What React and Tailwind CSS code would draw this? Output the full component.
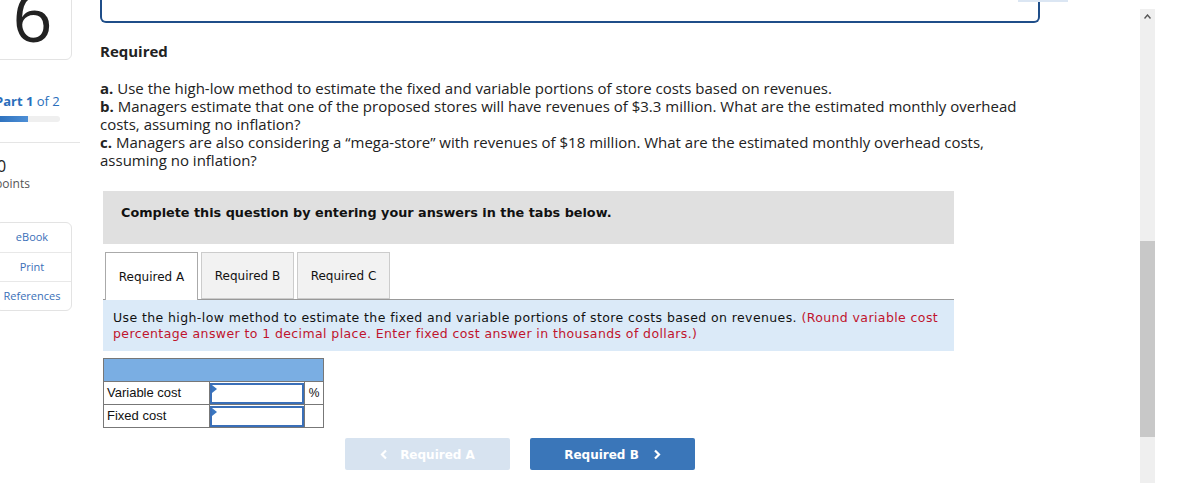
import React from 'react';

const Chevron = ({ dir }) => (
  <svg width="8" height="11" viewBox="0 0 8 11">
    <path
      d={dir === 'left' ? 'M6 1.5 L2 5.5 L6 9.5' : 'M2 1.5 L6 5.5 L2 9.5'}
      fill="none"
      stroke="currentColor"
      strokeWidth="2.2"
    />
  </svg>
);

const SideBar = () => {
  return (
    <div className="w-[77px] -ml-[5px] shrink-0 font-['Open_Sans',sans-serif]">
      <div className="h-[70px] -mt-[10px] border border-[#e3e3e3] rounded-br-[6px] flex justify-center items-start">
        <span className="text-[70px] leading-[64px] text-[#222] mt-[-8px] -ml-[2px]">6</span>
      </div>
      <div className="mt-[33px] text-[13px] leading-[16px] text-[#2a6ebb]">
        <span className="font-bold">Part 1</span> of 2
      </div>
      <div className="mt-[7px] h-[6px] w-[65px] rounded-full bg-[#efefef] overflow-hidden">
        <div className="h-full w-[33px] bg-gradient-to-r from-[#2a6ebb] to-[#4d8fd6]" />
      </div>
      <div className="mt-[20px] h-px w-[85px] bg-[#e5e5e5]" />
      <div className="mt-[15px] ml-[2px] text-[16px] leading-[16px] text-[#222]">0</div>
      <div className="mt-[2px] text-[12px] leading-[16px] text-[#555]">points</div>
      <div className="mt-[30px] border border-[#e3e3e3] rounded-[6px] text-[11px] text-[#3a6fb8] text-center">
        <div className="h-[29px] flex items-center justify-center pr-[3px]">eBook</div>
        <div className="h-[29px] flex items-center justify-center pr-[3px] border-t border-[#e8e8e8]">Print</div>
        <div className="h-[29px] flex items-center justify-center pr-[3px] border-t border-[#e8e8e8]">References</div>
      </div>
    </div>
  );
};

const Tabs = () => {
  const tabs = ['Required A', 'Required B', 'Required C'];
  return (
    <div className="flex gap-[3px] px-[2px] pt-[8px] font-['DejaVu_Sans',sans-serif] text-[12px]">
      {tabs.map((t, i) => (
        <div
          key={t}
          className={
            i === 0
              ? 'w-[93px] h-[48px] flex items-center justify-center border border-b-0 border-[#aaa] bg-white text-[#111] relative z-10 -mb-px'
              : 'w-[93px] h-[47px] flex items-center justify-center border border-[#ccc] bg-[#f2f2f2] text-[#111]'
          }
        >
          {t}
        </div>
      ))}
    </div>
  );
};

export default function App() {
  return (
    <div className="w-[1185px] h-[483px] overflow-hidden bg-white flex relative">
      <SideBar />

      <div className="ml-[28px] w-[940px] shrink-0">
        <div className="h-[24px] -mt-[1px] border-x-2 border-b-2 border-[#1f4e89] rounded-b-[6px] border-t-0" />

        <div className="font-['Open_Sans',sans-serif] text-[#222]">
          <div className="mt-[19px] text-[15px] leading-[18px] font-bold">Required</div>
          <div className="mt-[19px] w-[930px] text-[15px] leading-[18px]">
            <p><b>a.</b> Use the high-low method to estimate the fixed and variable portions of store costs based on revenues.</p>
            <p><b>b.</b> Managers estimate that one of the proposed stores will have revenues of $3.3 million. What are the estimated monthly overhead costs, assuming no inflation?</p>
            <p><b>c.</b> Managers are also considering a “mega-store” with revenues of $18 million. What are the estimated monthly overhead costs, assuming no inflation?</p>
          </div>
        </div>

        <div className="mt-[22px] ml-[3px] w-[851px]">
          <div className="h-[53px] bg-[#e0e0e0] px-[18px] pt-[14px] font-['DejaVu_Sans',sans-serif] font-bold text-[12.8px] leading-[16px] text-[#111]">
            Complete this question by entering your answers in the tabs below.
          </div>

          <Tabs />

          <div className="border-t border-[#999] bg-[#dbeaf8] px-[10px] pt-[10px] pb-[9px] font-['DejaVu_Sans',sans-serif] text-[12.5px] leading-[16px] text-[#111] tracking-[0.4px]">
            Use the high-low method to estimate the fixed and variable portions of store costs based on revenues.{' '}
            <span className="text-[#c0142d]">(Round variable cost percentage answer to 1 decimal place. Enter fixed cost answer in thousands of dollars.)</span>
          </div>

          <table className="mt-[7px] border-collapse font-['Liberation_Sans',sans-serif] text-[13px] text-[#111]">
            <tbody>
              <tr className="h-[23px] bg-[#7aaee3]">
                <td colSpan={3} className="border border-[#777]" />
              </tr>
              <tr className="h-[23px]">
                <td className="w-[106px] border border-[#777] px-[3px]">Variable cost</td>
                <td className="w-[95px] border border-[#777] p-0">
                  <div className="relative h-[21px] border-2 border-[#3a6fb8]">
                    <span className="absolute left-0 top-0 w-0 h-0 border-t-[4px] border-b-[4px] border-l-[5px] border-t-transparent border-b-transparent border-l-[#3a76c0]" />
                  </div>
                </td>
                <td className="w-[19px] border border-[#777] text-center text-[12px]">%</td>
              </tr>
              <tr className="h-[23px]">
                <td className="border border-[#777] px-[3px]">Fixed cost</td>
                <td className="border border-[#777] p-0">
                  <div className="relative h-[21px] border-2 border-[#3a6fb8]">
                    <span className="absolute left-0 top-0 w-0 h-0 border-t-[4px] border-b-[4px] border-l-[5px] border-t-transparent border-b-transparent border-l-[#3a76c0]" />
                  </div>
                </td>
                <td className="border border-[#777]" />
              </tr>
            </tbody>
          </table>

          <div className="mt-[10px] ml-[242px] flex gap-[20px] font-['DejaVu_Sans',sans-serif] font-bold text-[12px] text-white">
            <div className="w-[165px] h-[32px] rounded-[2px] bg-[#d7e3f0] flex items-center justify-center gap-[12px] pt-px">
              <Chevron dir="left" /> Required A
            </div>
            <div className="w-[165px] h-[32px] rounded-[2px] bg-[#3a76b9] flex items-center justify-center gap-[14px] pt-px">
              Required B <Chevron dir="right" />
            </div>
          </div>
        </div>
      </div>

      <div className="absolute left-[1018px] top-0 w-[50px] h-[2px] bg-[#dbe6f3]" />

      <div className="ml-[100px] mt-[9px] w-[15px] h-[474px] bg-[#efefef] flex flex-col">
        <div className="h-[15px] flex items-center justify-center">
          <svg width="7" height="5" viewBox="0 0 7 5"><path d="M0.5 4.5 L3.5 1 L6.5 4.5" fill="none" stroke="#555" strokeWidth="1.4" /></svg>
        </div>
        <div className="mt-[217px] h-[196px] bg-[#c8c8c8] w-[15px]" />
      </div>
    </div>
  );
}
